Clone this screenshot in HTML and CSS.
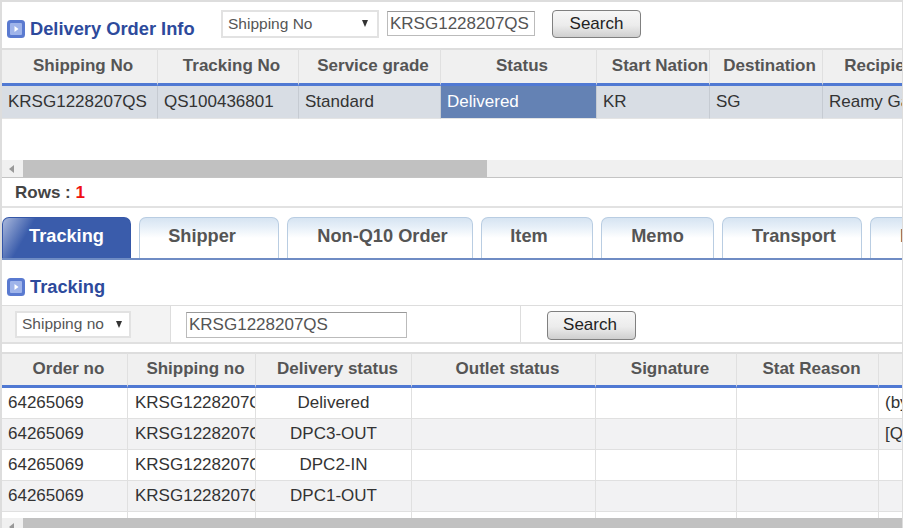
FILE: index.html
```html
<!DOCTYPE html>
<html lang="en">
<head>
  <meta charset="UTF-8" />
  <title>Delivery Order Info</title>
  <link rel="stylesheet" href="styles.css">
</head>
<body>
  <div class="frame">

    <!-- top search bar -->
    <div class="toolbar">
      <h2 class="title title-main">
        <svg class="title-icon" viewBox="0 0 18 18"><rect width="18" height="18" rx="3.5" fill="#5a7ad0"/><rect x="3" y="3" width="12" height="12" rx="1" fill="#9fb4ea"/><path d="M7.5 6l4 3-4 3z" fill="#fff"/></svg>
        Delivery Order Info
      </h2>
      <div class="select-box select-top">
        <select><option>Shipping No</option></select>
      </div>
      <input type="text" class="text-input input-top" value="KRSG1228207QS">
      <button class="search-btn btn-top">Search</button>
    </div>

    <div class="grid grid-top">
      <table>
        <colgroup>
          <col class="w156"><col class="w141"><col class="w142"><col class="w156"><col class="w113"><col class="w113"><col class="w155">
        </colgroup>
        <thead>
          <tr><th>Shipping No</th><th>Tracking No</th><th>Service grade</th><th>Status</th><th class="th-nation">Start Nation</th><th>Destination</th><th class="th-recipient">Recipient name</th></tr>
        </thead>
        <tbody>
          <tr class="row-selected"><td>KRSG1228207QS</td><td>QS100436801</td><td>Standard</td><td class="cell-active">Delivered</td><td>KR</td><td>SG</td><td>Reamy Gan</td></tr>
        </tbody>
      </table>
    </div>
    <div class="scrollbar scrollbar-top"><span class="arrow"></span><span class="thumb thumb-top"></span></div>

    <div class="rows-count">Rows : <b>1</b></div>

    <div class="tabs">
      <a class="tab tab-active">Tracking</a>
      <a class="tab tab-shipper">Shipper</a>
      <a class="tab tab-order">Non-Q10 Order</a>
      <a class="tab tab-item">Item</a>
      <a class="tab">Memo</a>
      <a class="tab tab-transport">Transport</a>
      <a class="tab tab-cut">Remark</a>
    </div>

    <h2 class="title title-sub">
      <svg class="title-icon" viewBox="0 0 18 18"><rect width="18" height="18" rx="3.5" fill="#5a7ad0"/><rect x="3" y="3" width="12" height="12" rx="1" fill="#9fb4ea"/><path d="M7.5 6l4 3-4 3z" fill="#fff"/></svg>
      Tracking
    </h2>

    <div class="filter">
      <div class="filter-cell filter-type">
        <div class="select-box select-sub">
          <select><option>Shipping no</option></select>
        </div>
      </div>
      <div class="filter-cell filter-value">
        <input type="text" class="text-input input-sub" value="KRSG1228207QS">
      </div>
      <div class="filter-cell filter-action">
        <button class="search-btn btn-sub">Search</button>
      </div>
    </div>

    <div class="grid grid-sub">
      <table>
        <colgroup>
          <col class="w126"><col class="w128"><col class="w156"><col class="w184"><col class="w141"><col class="w142"><col class="w155">
        </colgroup>
        <thead>
          <tr><th>Order no</th><th>Shipping no</th><th>Delivery status</th><th>Outlet status</th><th>Signature</th><th>Stat Reason</th><th></th></tr>
        </thead>
        <tbody>
          <tr><td>64265069</td><td class="cell-wide">KRSG1228207QS</td><td class="center">Delivered</td><td></td><td></td><td></td><td>(by customer)</td></tr>
          <tr class="row-alt"><td>64265069</td><td class="cell-wide">KRSG1228207QS</td><td class="center">DPC3-OUT</td><td></td><td></td><td></td><td>[Qxpress]</td></tr>
          <tr><td>64265069</td><td class="cell-wide">KRSG1228207QS</td><td class="center">DPC2-IN</td><td></td><td></td><td></td><td></td></tr>
          <tr class="row-alt"><td>64265069</td><td class="cell-wide">KRSG1228207QS</td><td class="center">DPC1-OUT</td><td></td><td></td><td></td><td></td></tr>
          <tr class="row-end"><td></td><td></td><td></td><td></td><td></td><td></td><td></td></tr>
        </tbody>
      </table>
    </div>
    <div class="scrollbar scrollbar-sub"><span class="arrow"></span><span class="thumb thumb-sub"></span></div>

  </div>
</body>
</html>
```

FILE: styles.css
```css
* {
  box-sizing: border-box;
  margin: 0;
  padding: 0;
  font-family: "Liberation Sans", Arial, sans-serif;
}

html, body {
  background-color: #fff;
  overflow: hidden;
}

.frame {
  width: 903px;
  height: 528px;
  border-top: 2px solid #ddd;
  border-left: 2px solid #ddd;
  border-right: 1px solid #ddd;
  overflow: hidden;
}

/* --- titles --- */
.title {
  display: flex;
  align-items: center;
  gap: 5px;
  color: #2d4a9c;
  font-size: 18.3px;
  font-weight: bold;
  line-height: 20px;
}
.title-icon {
  width: 18px;
  height: 18px;
  flex: none;
}
.title-main {
  width: 214px;
  padding: 17px 0 0 5px;
}
.title-sub {
  height: 45px;
  padding: 8px 0 0 5px;
}

/* --- toolbar --- */
.toolbar {
  display: flex;
  align-items: flex-start;
  height: 46px;
}

.select-box {
  position: relative;
  background: #fff;
  border: 2px solid #e2e2e2;
}
.select-box::after {
  content: "";
  position: absolute;
  top: 8px;
  right: 9px;
  border-left: 3.5px solid transparent;
  border-right: 3.5px solid transparent;
  border-top: 7px solid #333;
}
.select-box select {
  display: block;
  width: 100%;
  height: 100%;
  border: none;
  background: transparent;
  appearance: none;
  color: #555;
  font-size: 15.5px;
  padding: 0 0 2px 5px;
  outline: none;
}
.select-top {
  width: 158px;
  height: 28px;
  margin: 8px 8px 0 5px;
}
.select-sub {
  width: 116px;
  height: 27px;
}
.select-sub::after {
  right: 7px;
}

.text-input {
  border: 1px solid #bbb;
  border-top-color: #999;
  color: #555;
  font-size: 17px;
  padding-left: 2px;
  outline: none;
}
.input-top {
  width: 148px;
  height: 25px;
  margin-top: 9px;
}
.input-sub {
  width: 221px;
  height: 26px;
  margin-top: 2px;
}

.search-btn {
  width: 89px;
  height: 28px;
  border: 1px solid #808080;
  border-radius: 4px;
  background: linear-gradient(#f7f7f7, #ececec 55%, #cfcfcf);
  color: #222;
  font-size: 17px;
}
.btn-top {
  margin: 8px 0 0 17px;
}
.btn-sub {
  height: 29px;
  margin-top: 2px;
  padding-right: 3px;
}

/* --- grids --- */
.grid {
  overflow: hidden;
}
.grid table {
  width: 900px;
  table-layout: fixed;
  border-collapse: separate;
  border-spacing: 0;
}
.grid-top {
  height: 112px;
}
.grid-sub {
  height: 166px;
}

.w126 { width: 126px; }
.w128 { width: 128px; }
.w113 { width: 113px; }
.w141 { width: 141px; }
.w142 { width: 142px; }
.w155 { width: 155px; }
.w156 { width: 156px; }
.w184 { width: 184px; }

.grid th {
  background-color: #f0f0f0;
  border-top: 2px solid #ddd;
  border-right: 1px solid #e0e0e0;
  border-bottom: 3px solid #5079d3;
  color: #555;
  font-size: 17px;
  font-weight: bold;
  padding-bottom: 2px;
  white-space: nowrap;
  overflow: hidden;
}
.grid-top th {
  height: 38px;
  padding-left: 7px;
}
.grid-top th.th-nation {
  padding-left: 14px;
}
.grid-top th.th-recipient {
  padding-left: 14px;
}
.grid-sub th {
  height: 36px;
  padding-left: 8px;
}
.grid td {
  height: 31px;
  padding-left: 6px;
  border-right: 1px solid #e0e0e0;
  border-bottom: 1px solid #e0e0e0;
  color: #333;
  font-size: 17px;
  white-space: nowrap;
  overflow: hidden;
}
.grid td.cell-wide {
  padding-left: 7px;
}
.grid td.center {
  padding-left: 0;
  text-align: center;
}

.row-selected td {
  height: 33px;
  background-color: #d8dde4;
  border-right-color: #c6cbd2;
  border-bottom-color: #e4e4e4;
}
.grid td.cell-active {
  background-color: #6482b4;
  color: #fff;
}
.row-alt td {
  background-color: #f2f2f3;
}
.grid .row-end td {
  height: 6px;
  border-bottom: none;
}

/* --- scrollbars --- */
.scrollbar {
  display: flex;
  background-color: #f0f0f0;
  overflow: hidden;
}
.scrollbar-top {
  height: 18px;
  border-bottom: 1px solid #c4c4c4;
}
.scrollbar-sub {
  height: 10px;
}
.arrow {
  flex: none;
  width: 21px;
  display: flex;
  align-items: center;
  padding-left: 7px;
}
.arrow::before {
  content: "";
  border-top: 4px solid transparent;
  border-bottom: 4px solid transparent;
  border-right: 5px solid #999;
}
.scrollbar-sub .arrow::before {
  margin-top: 8px;
}
.thumb {
  background-color: #c1c1c1;
}
.thumb-top {
  width: 464px;
}
.thumb-sub {
  width: 880px;
}

/* --- rows count --- */
.rows-count {
  height: 30px;
  padding-left: 13px;
  border-bottom: 2px solid #e2e2e2;
  color: #444;
  font-size: 17px;
  font-weight: bold;
  line-height: 29px;
}
.rows-count b {
  color: #f01010;
}

/* --- tabs --- */
.tabs {
  display: grid;
  grid-template-columns: 129px 140px 186px 112px 113px 140px 1fr;
  column-gap: 8px;
  height: 43px;
  margin-top: 9px;
  border-bottom: 2px solid #6f8cc4;
  overflow: hidden;
}
.tab {
  border: 1px solid #b9cde2;
  border-bottom: none;
  border-radius: 7px 7px 0 0;
  background: linear-gradient(#d6e4f2, #e6eff8 22%, #fff 50%);
  color: #555;
  font-size: 18.2px;
  font-weight: bold;
  line-height: 37px;
  text-align: center;
  white-space: nowrap;
}
.tab-active {
  border-color: #3557a8;
  background: linear-gradient(120deg, #a9b8dc, #3a5cab 22%);
  color: #fff;
}
.tab-shipper {
  padding-right: 14px;
}
.tab-order {
  padding-left: 5px;
}
.tab-item {
  padding-right: 16px;
}
.tab-transport {
  padding-left: 4px;
}
.tab-cut {
  padding-left: 29px;
  border-right: none;
  border-radius: 7px 0 0 0;
  text-align: left;
}

/* --- filter --- */
.filter {
  display: flex;
  height: 39px;
  margin-bottom: 8px;
  border-top: 1px solid #ddd;
  border-bottom: 2px solid #e0e0e0;
}
.filter-cell {
  display: flex;
  align-items: center;
  border-right: 1px solid #ddd;
}
.filter-type {
  width: 169px;
  padding-left: 13px;
  background-color: #f3f3f3;
}
.filter-value {
  width: 350px;
  padding-left: 15px;
  background-color: #fff;
}
.filter-action {
  flex: 1;
  padding-left: 26px;
  border-right: none;
}
```
